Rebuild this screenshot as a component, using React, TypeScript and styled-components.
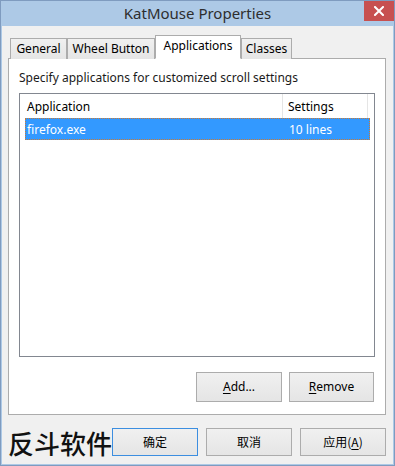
import React from "react";
import styled, { createGlobalStyle } from "styled-components";

const GlobalStyle = createGlobalStyle`
  html, body {
    margin: 0;
    padding: 0;
    background: #ffffff;
  }
  * {
    box-sizing: border-box;
  }
`;

const UI_FONT = `"Noto Sans", "Noto Sans CJK SC", sans-serif`;
const CJK_FONT = `"Noto Sans CJK SC", "Noto Sans", sans-serif`;

export default function App() {
  return (
    <>
      <GlobalStyle />
      <Window>
        <TitleBar>
          <span />
          <Title>KatMouse Properties</Title>
          <CloseButton aria-label="Close">
            <svg width="10" height="10" viewBox="0 0 10 10">
              <path
                d="M1 1 L9 9 M9 1 L1 9"
                stroke="#ffffff"
                strokeWidth="2"
                strokeLinecap="square"
              />
            </svg>
          </CloseButton>
        </TitleBar>
        <Client>
          <TabStrip>
            <Tab $width={57}>General</Tab>
            <Tab $width={88}>Wheel Button</Tab>
            <Tab $width={86} $active>
              Applications
            </Tab>
            <Tab $width={51}>Classes</Tab>
          </TabStrip>
          <Panel>
            <Caption>Specify applications for customized scroll settings</Caption>
            <ListBox>
              <Header>
                <HeaderCell $pad={7}>Application</HeaderCell>
                <HeaderCell $pad={5} $divider>
                  Settings
                </HeaderCell>
              </Header>
              <Rows>
                <Row $selected>
                  <span>firefox.exe</span>
                  <span>10 lines</span>
                </Row>
              </Rows>
            </ListBox>
            <ButtonRow>
              <Button $width={86} $height={30}>
                <u>A</u>dd...
              </Button>
              <Button $width={85} $height={30}>
                <u>R</u>emove
              </Button>
            </ButtonRow>
          </Panel>
          <Footer>
            <Watermark>反斗软件</Watermark>
            <FooterButtons>
              <Button $width={86} $height={28} $default $cjk>
                确定
              </Button>
              <Button $width={86} $height={28} $cjk>
                取消
              </Button>
              <Button $width={86} $height={28} $cjk>
                应用(<u>A</u>)
              </Button>
            </FooterButtons>
          </Footer>
        </Client>
      </Window>
    </>
  );
}

const Window = styled.div`
  width: 395px;
  height: 466px;
  background: #adc9e6;
  border: 1px solid #7f9bbf;
  display: flex;
  flex-direction: column;
  font-family: ${UI_FONT};
  font-size: 12px;
  color: #000000;
`;

const TitleBar = styled.div`
  height: 25px;
  flex: none;
  display: grid;
  grid-template-columns: 1fr auto 1fr;
  align-items: center;
`;

const Title = styled.div`
  font-family: ${UI_FONT};
  font-size: 15px;
  color: #2e2e2e;
  line-height: 25px;
  margin-top: -1px;
`;

const CloseButton = styled.div`
  justify-self: end;
  align-self: start;
  width: 30px;
  height: 20px;
  background: #c75050;
  display: grid;
  place-content: center;
`;

const Client = styled.div`
  flex: 1;
  margin: 0 1px 1px 1px;
  background: #f0f0f0;
  padding: 9px 7px 0 6px;
  display: flex;
  flex-direction: column;
`;

const TabStrip = styled.div`
  display: flex;
  align-items: flex-end;
  height: 24px;
  padding-left: 2px;
  margin-bottom: -1px;
  position: relative;
  z-index: 1;
`;

const Tab = styled.div<{ $width: number; $active?: boolean }>`
  width: ${(p) => p.$width}px;
  height: ${(p) => (p.$active ? 24 : 21)}px;
  border: 1px solid #acacac;
  border-bottom: ${(p) => (p.$active ? "1px solid #ffffff" : "none")};
  background: ${(p) =>
    p.$active ? "#ffffff" : "linear-gradient(#f0f0f0, #e5e5e5)"};
  display: flex;
  align-items: center;
  justify-content: center;
  padding-bottom: ${(p) => (p.$active ? 3 : 0)}px;
  line-height: 16px;
  white-space: nowrap;
`;

const Panel = styled.div`
  width: 378px;
  height: 357px;
  flex: none;
  background: #ffffff;
  border: 1px solid #acacac;
  padding: 11px 10px 0 10px;
  display: flex;
  flex-direction: column;
`;

const Caption = styled.div`
  line-height: 16px;
  height: 16px;
  white-space: nowrap;
  color: #1a1a1a;
`;

const ListBox = styled.div`
  margin-top: 7px;
  width: 356px;
  height: 264px;
  border: 1px solid #828790;
  background: #ffffff;
  display: flex;
  flex-direction: column;
`;

const Header = styled.div`
  height: 24px;
  display: grid;
  grid-template-columns: 262px 86px;
  align-items: stretch;
`;

const HeaderCell = styled.div<{ $pad: number; $divider?: boolean }>`
  padding-left: ${(p) => p.$pad}px;
  padding-top: 2px;
  display: flex;
  align-items: center;
  line-height: 16px;
  border-left: ${(p) => (p.$divider ? "1px solid #e5e5e5" : "none")};
  border-right: ${(p) => (p.$divider ? "1px solid #e5e5e5" : "none")};
`;

const Rows = styled.div`
  padding: 0 4px 0 5px;
`;

const Row = styled.div<{ $selected?: boolean }>`
  height: 22px;
  display: grid;
  grid-template-columns: 262px 1fr;
  align-items: center;
  padding: 1px 0 0 1px;
  line-height: 16px;
  background: ${(p) => (p.$selected ? "#3399ff" : "transparent")};
  color: ${(p) => (p.$selected ? "#ffffff" : "#000000")};
  border: 1px dotted ${(p) => (p.$selected ? "#cc7a33" : "transparent")};
`;

const ButtonRow = styled.div`
  margin-top: 15px;
  display: flex;
  justify-content: flex-end;
  gap: 7px;
  padding-right: 1px;
`;

const Button = styled.div<{
  $width: number;
  $height: number;
  $default?: boolean;
  $cjk?: boolean;
}>`
  width: ${(p) => p.$width}px;
  height: ${(p) => p.$height}px;
  border: 1px solid ${(p) => (p.$default ? "#3c8ee0" : "#acacac")};
  background: linear-gradient(#f0f0f0, #e5e5e5);
  display: flex;
  align-items: center;
  justify-content: center;
  font-family: ${(p) => (p.$cjk ? CJK_FONT : UI_FONT)};
  font-size: 12px;
  line-height: 16px;
  color: #000000;

  u {
    text-decoration: underline;
    text-underline-offset: 2px;
  }
`;

const Footer = styled.div`
  display: flex;
  align-items: center;
  padding-top: 10px;
`;

const Watermark = styled.div`
  font-family: ${CJK_FONT};
  font-size: 26px;
  line-height: 32px;
  font-weight: 500;
  color: #111111;
  padding-top: 2px;
  white-space: nowrap;
`;

const FooterButtons = styled.div`
  margin-left: auto;
  display: flex;
  gap: 8px;
`;
